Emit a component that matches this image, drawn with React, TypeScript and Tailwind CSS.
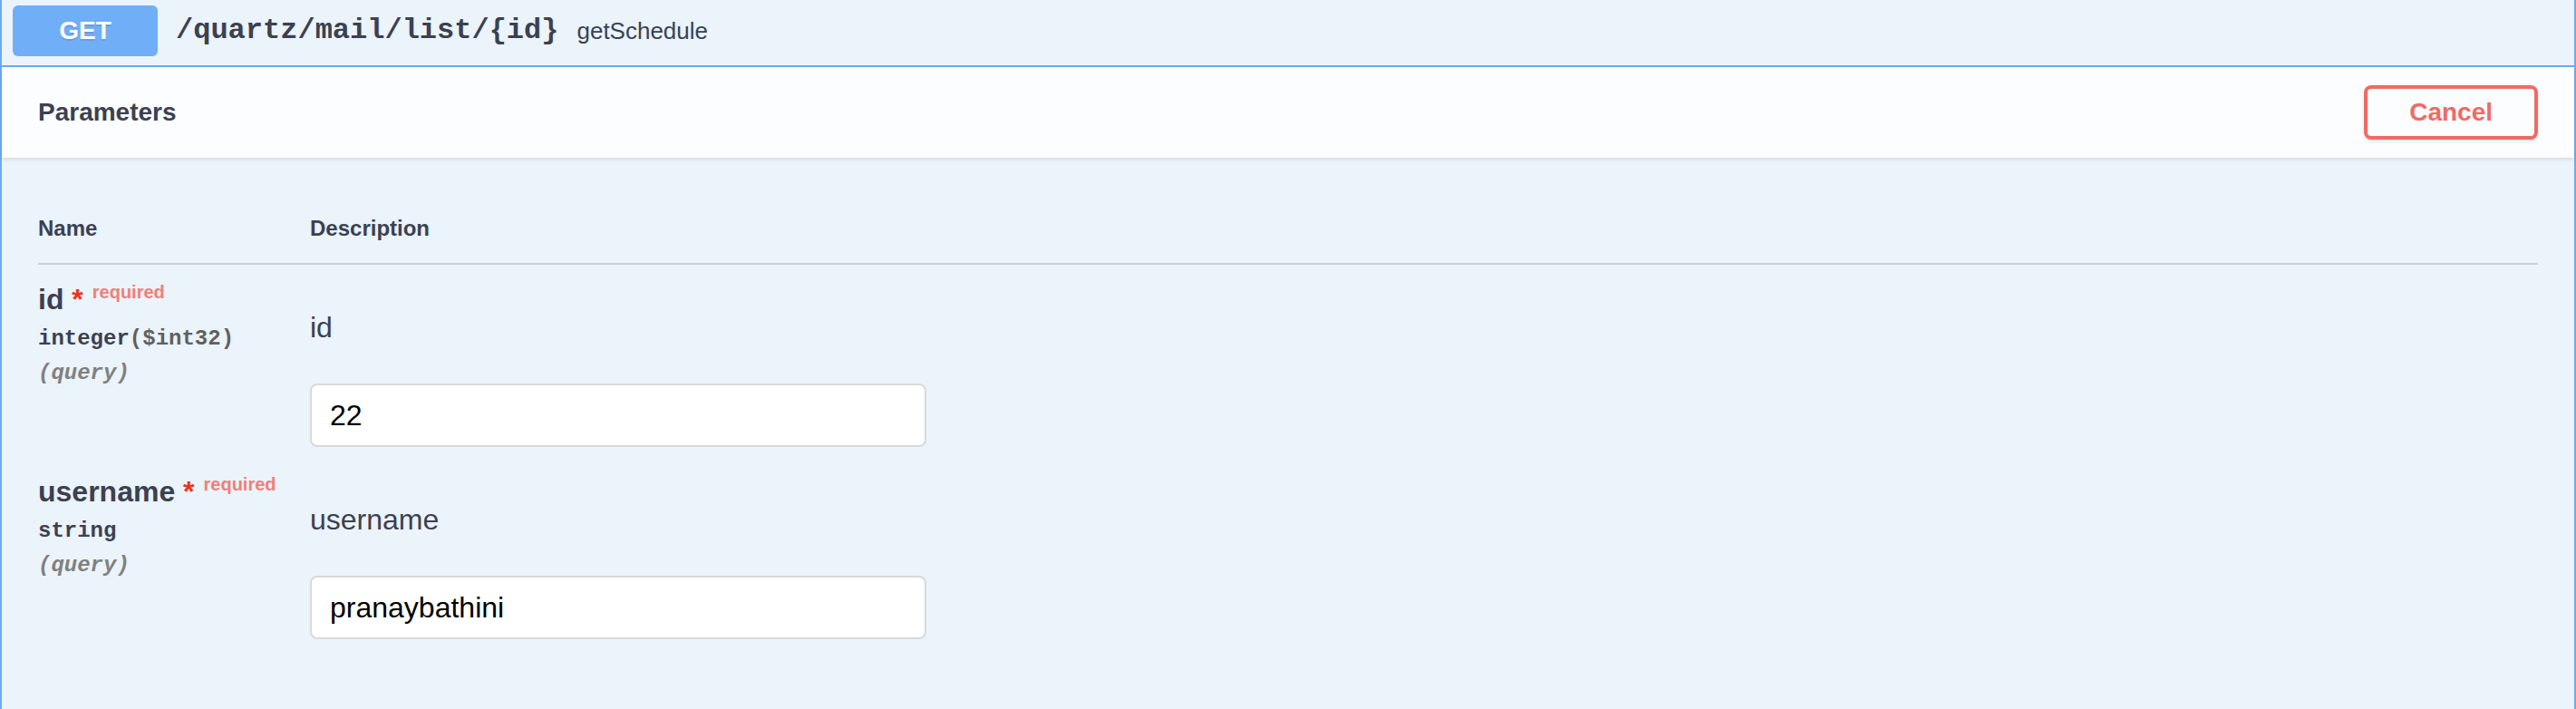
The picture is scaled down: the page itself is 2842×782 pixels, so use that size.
import React from 'react';

const mono = "font-['Liberation_Mono','Courier_New',monospace]";

type Param = {
  name: string;
  type: string;
  format?: string;
  location: string;
  value: string;
};

const params: Param[] = [
  { name: 'id', type: 'integer', format: '($int32)', location: '(query)', value: '22' },
  { name: 'username', type: 'string', location: '(query)', value: 'pranaybathini' },
];

function ParamRow({ p }: { p: Param }) {
  return (
    <div className="flex pt-[20px] pb-[11px]">
      <div className="w-[300px] shrink-0">
        <div className="text-[32px] font-bold leading-[36px]">
          {p.name}
          <span className="text-[#eb3323]">&nbsp;*</span>
          <span className="relative -top-[12px] px-[10px] text-[20px] leading-[20px] font-bold text-[#f07f79]">
            required
          </span>
        </div>
        <div className={`mt-[12px] ${mono} text-[24px] font-bold leading-[28px]`}>
          {p.type}
          {p.format && <span className="text-[#606060]">{p.format}</span>}
        </div>
        <div className={`mt-[10px] ${mono} text-[24px] font-bold italic leading-[28px] text-[#808080]`}>
          {p.location}
        </div>
      </div>
      <div className="flex flex-col">
        <div className="mt-[31px] text-[32px] leading-[36px]">{p.name}</div>
        <input
          type="text"
          defaultValue={p.value}
          className="mt-[44px] w-[680px] h-[70px] border-2 border-[#d9d9d9] rounded-[8px] bg-white px-[20px] text-[32px] text-black outline-none"
        />
      </div>
    </div>
  );
}

export default function App() {
  return (
    <div className="w-[2842px] h-[782px] overflow-hidden bg-white font-['Liberation_Sans',Arial,sans-serif] text-[#3b4151]">
      <div className="h-full border-x-2 border-[#6cabf5] bg-[#ebf3fb]">
        {/* summary bar */}
        <div className="flex items-center pl-[12px] pt-[6px] pb-[10px] border-b-2 border-[#6cabf5]">
          <span className="w-[160px] h-[56px] flex items-center justify-center rounded-[6px] bg-[#70aef7] text-white text-[28px] font-bold [text-shadow:0_2px_0_rgba(0,0,0,0.1)]">
            GET
          </span>
          <span className={`px-[20px] ${mono} text-[32px] font-bold`}>/quartz/mail/list/{'{id}'}</span>
          <span className="text-[26px]">getSchedule</span>
        </div>

        {/* section header */}
        <div className="relative flex items-center justify-between h-[100px] px-[40px] bg-white/80 shadow-[0_2px_4px_rgba(0,0,0,0.1)]">
          <h4 className="text-[28px] font-bold">Parameters</h4>
          <button className="h-[60px] px-[46px] border-4 border-[#ef6b64] rounded-[8px] bg-transparent text-[#ef6b64] text-[28px] font-bold shadow-[0_2px_4px_rgba(0,0,0,0.1)]">
            Cancel
          </button>
        </div>

        {/* parameters table */}
        <div className="px-[40px] pt-[64px]">
          <div className="flex text-[24px] font-bold leading-[28px] pb-[24px] border-b-2 border-[#c9cfd9]">
            <div className="w-[300px] shrink-0">Name</div>
            <div>Description</div>
          </div>
          {params.map((p) => (
            <ParamRow key={p.name} p={p} />
          ))}
        </div>
      </div>
    </div>
  );
}
